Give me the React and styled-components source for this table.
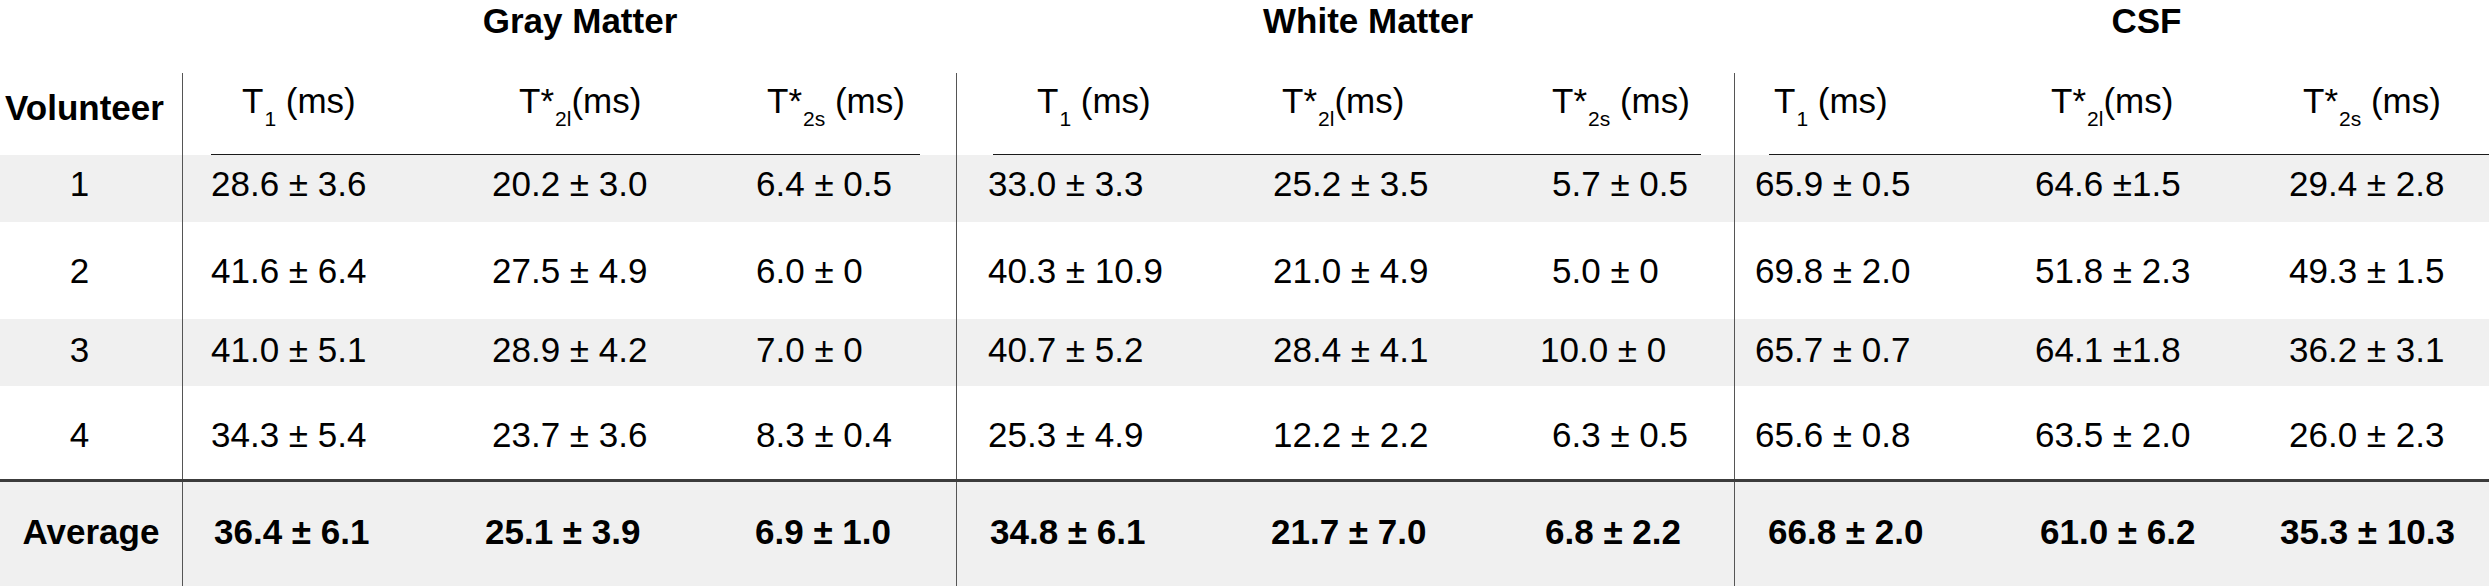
import styled, { createGlobalStyle } from "styled-components";

const GlobalStyle = createGlobalStyle`
  html, body {
    margin: 0;
    padding: 0;
    background: #fff;
  }
  body {
    font-family: "Liberation Sans", Arial, sans-serif;
    color: #000;
  }
`;

// column layout: volunteer column, then 3 groups x 3 columns
const columns = [
  { w: 310, pad: 28, head: 31, avg: 3, first: true, inL: 28 },
  { w: 264, pad: 0, head: 27, avg: -7 },
  { w: 200, pad: 0, head: 11, avg: -1, inR: 36 },
  { w: 317, pad: 31, head: 49, avg: 2, first: true, inL: 36 },
  { w: 279, pad: 0, head: 9, avg: -2 },
  { w: 182, pad: 0, head: -16, avg: -7, inR: 33 },
  { w: 301, pad: 20, head: 19, avg: 13, first: true, inL: 34 },
  { w: 254, pad: 0, head: 16, avg: 5 },
  { w: 200, pad: 0, head: 14, avg: -9, inR: 0 },
];

const GRID = `182px ${columns.map((c) => c.w + "px").join(" ")}`;

const groups = [
  { title: "Gray Matter", shift: 22, width: 774 },
  { title: "White Matter", shift: 46, width: 778 },
  { title: "CSF", shift: 70, width: 755 },
];

const headers = [
  { sub: "1", star: false, gap: true },
  { sub: "2l", star: true, gap: false },
  { sub: "2s", star: true, gap: true },
];

const rows = [
  {
    id: "1",
    h: 67,
    shade: true,
    lift: 5,
    vals: ["28.6 ± 3.6", "20.2 ± 3.0", "6.4 ± 0.5", "33.0 ± 3.3", "25.2 ± 3.5", "5.7 ± 0.5", "65.9 ± 0.5", "64.6 ±1.5", "29.4 ± 2.8"],
  },
  {
    id: "2",
    h: 97,
    shade: false,
    lift: 0,
    vals: ["41.6 ± 6.4", "27.5 ± 4.9", "6.0 ± 0", "40.3 ± 10.9", "21.0 ± 4.9", "5.0 ± 0", "69.8 ± 2.0", "51.8 ± 2.3", "49.3 ± 1.5"],
  },
  {
    id: "3",
    h: 67,
    shade: true,
    lift: 3,
    vals: ["41.0 ± 5.1", "28.9 ± 4.2", "7.0 ± 0", "40.7 ± 5.2", "28.4 ± 4.1", "10.0 ± 0", "65.7 ± 0.7", "64.1 ±1.8", "36.2 ± 3.1"],
    shifts: { 5: -12 },
  },
  {
    id: "4",
    h: 93,
    shade: false,
    lift: -2,
    vals: ["34.3 ± 5.4", "23.7 ± 3.6", "8.3 ± 0.4", "25.3 ± 4.9", "12.2 ± 2.2", "6.3 ± 0.5", "65.6 ± 0.8", "63.5 ± 2.0", "26.0 ± 2.3"],
  },
];

const averages = ["36.4 ± 6.1", "25.1 ± 3.9", "6.9 ± 1.0", "34.8 ± 6.1", "21.7 ± 7.0", "6.8 ± 2.2", "66.8 ± 2.0", "61.0 ± 6.2", "35.3 ± 10.3"];

const Page = styled.div`
  width: 2489px;
  height: 586px;
  overflow: hidden;
  display: flex;
  flex-direction: column;
  background: #fff;
`;

const TitleRow = styled.div`
  display: grid;
  grid-template-columns: 182px ${groups.map((g) => g.width + "px").join(" ")};
  height: 73px;
`;

const GroupTitle = styled.div`
  font-size: 35px;
  font-weight: bold;
  line-height: 35px;
  text-align: center;
  padding-top: 3px;
  padding-left: ${(p) => p.$shift}px;
`;

const HeadRow = styled.div`
  display: grid;
  grid-template-columns: ${GRID};
  height: 82px;
`;

const Row = styled.div`
  display: grid;
  grid-template-columns: ${GRID};
  height: ${(p) => p.$h}px;
  background: ${(p) => (p.$shade ? "#f0f0f0" : "#fff")};
  border-top: ${(p) => (p.$rule ? "3px solid #3c3c3c" : "none")};
  box-sizing: border-box;
`;

const VolCell = styled.div`
  display: flex;
  align-items: ${(p) => (p.$top ? "flex-start" : "center")};
  justify-content: center;
  font-size: 35px;
  font-weight: ${(p) => (p.$bold ? "bold" : "normal")};
  padding-top: ${(p) => p.$pt || 0}px;
  padding-right: ${(p) => p.$pr || 0}px;
  padding-bottom: ${(p) => (p.$lift > 0 ? p.$lift * 2 : 0)}px;
  margin-top: ${(p) => (p.$lift < 0 ? -p.$lift * 2 : 0)}px;
`;

const Cell = styled.div`
  display: flex;
  align-items: center;
  font-size: 35px;
  font-weight: ${(p) => (p.$bold ? "bold" : "normal")};
  white-space: nowrap;
  padding-left: ${(p) => p.$pad}px;
  border-left: ${(p) => (p.$first ? "1px solid #555" : "none")};
  padding-bottom: ${(p) => (p.$lift > 0 ? p.$lift * 2 : 0)}px;
  padding-top: ${(p) => (p.$lift < 0 ? -p.$lift * 2 : 0)}px;
`;

const Value = styled.span`
  margin-left: ${(p) => p.$shift || 0}px;
`;

const HeadCell = styled.div`
  display: flex;
  border-left: ${(p) => (p.$first ? "1px solid #555" : "none")};
`;

const HeadInner = styled.div`
  flex: 1;
  margin-left: ${(p) => p.$inL || 0}px;
  margin-right: ${(p) => p.$inR || 0}px;
  border-bottom: 1px solid #1a1a1a;
  padding-left: ${(p) => p.$pad}px;
  padding-top: 8px;
  font-size: 35px;
  white-space: nowrap;
`;

const Sub = styled.span`
  font-size: 21px;
  position: relative;
  top: 13px;
  margin-left: 1px;
`;

function HeadLabel({ sub, star, gap }) {
  return (
    <span>
      T{star ? "*" : ""}
      <Sub>{sub}</Sub>
      {gap ? " " : ""}(ms)
    </span>
  );
}

function App() {
  return (
    <Page>
      <GlobalStyle />
      <TitleRow>
        <div />
        {groups.map((g) => (
          <GroupTitle key={g.title} $shift={g.shift}>
            {g.title}
          </GroupTitle>
        ))}
      </TitleRow>

      <HeadRow>
        <VolCell $bold $top $pt={15} $pr={13}>
          Volunteer
        </VolCell>
        {columns.map((c, i) => {
          const h = headers[i % 3];
          return (
            <HeadCell key={i} $first={c.first}>
              <HeadInner $inL={c.inL} $inR={c.inR} $pad={c.pad + c.head - (c.inL || 0)}>
                <HeadLabel {...h} />
              </HeadInner>
            </HeadCell>
          );
        })}
      </HeadRow>

      {rows.map((r) => (
        <Row key={r.id} $h={r.h} $shade={r.shade}>
          <VolCell $pr={23} $lift={r.lift}>
            {r.id}
          </VolCell>
          {r.vals.map((v, i) => (
            <Cell key={i} $first={columns[i].first} $pad={columns[i].pad} $lift={r.lift}>
              <Value $shift={r.shifts?.[i]}>{v}</Value>
            </Cell>
          ))}
        </Row>
      ))}

      <Row $h={107} $shade $rule>
        <VolCell $bold $lift={2}>
          Average
        </VolCell>
        {averages.map((v, i) => (
          <Cell key={i} $bold $first={columns[i].first} $pad={columns[i].pad} $lift={2}>
            <Value $shift={columns[i].avg}>{v}</Value>
          </Cell>
        ))}
      </Row>
    </Page>
  );
}

export default App;
